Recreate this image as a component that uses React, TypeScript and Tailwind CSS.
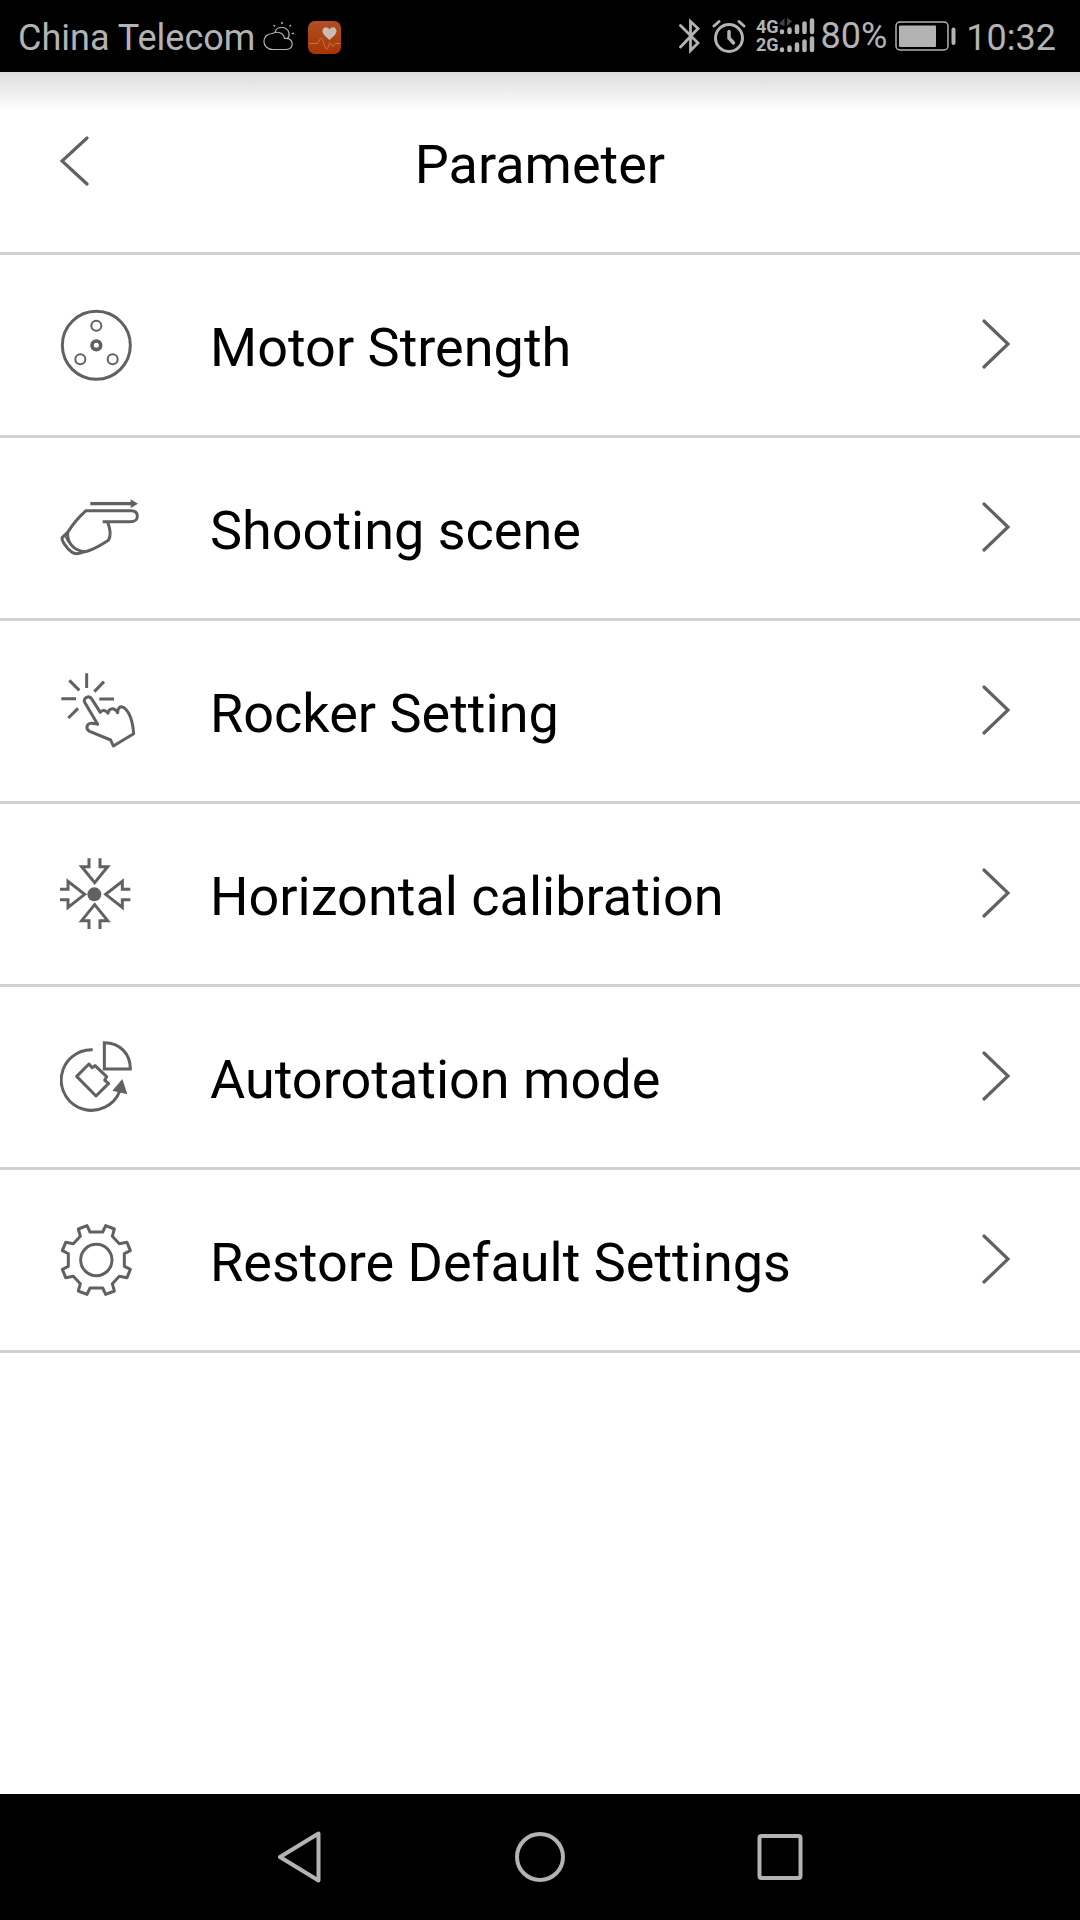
import type { ReactNode } from "react";

type IconProps = { viewBox: string; children: ReactNode };

function RowIcon({ viewBox, children }: IconProps) {
  return (
    <svg
      viewBox={viewBox}
      className="size-20 shrink-0"
      fill="none"
      stroke="#626060"
      strokeWidth={9}
      strokeLinejoin="round"
      aria-hidden="true"
    >
      {children}
    </svg>
  );
}

const motorIcon = (
  <RowIcon viewBox="60 45 240 240">
    <circle cx={169} cy={166} r={102} />
    <circle cx={169} cy={166} r={13} strokeWidth={11} />
    <circle cx={169} cy={107} r={15} strokeWidth={6} />
    <circle cx={121} cy={208} r={15} strokeWidth={6} />
    <circle cx={218} cy={208} r={15} strokeWidth={6} />
  </RowIcon>
);

const sceneIcon = (
  <RowIcon viewBox="60 24 240 240">
    <path d="M151 71H276" strokeWidth={10} />
    <path d="M272 58L294 71L272 84Z" fill="#626060" stroke="none" />
    <path d="M188 125L270 125C287 125 292 120 292 108C292 97 286 92 273 92L138 92C118 110 98 133 83 157C81 185 98 212 136 215C161 210 184 194 205 181C215 166 210 145 203 126" />
    <path d="M83 157L67 172C62 180 82 207 96 217C106 224 118 222 134 215" />
    <path d="M75 167C82 186 97 204 122 214" strokeWidth={5} />
  </RowIcon>
);

const rockerIcon = (
  <RowIcon viewBox="60 33 240 240">
    <path d="M140 40V84M88 61L118 91M192 65L163 95M64 116H108M178 117H222M114 145L85 174" />
    <path d="M173 193L134 127C128 113 148 104 156 118L181 157C184 151 196 147 204 160C206 145 222 140 233 158C233 143 240 138 250 142C268 154 278 183 281 221L220 258L212 240L149 214C136 207 140 193 150 190C157 188 166 191 173 193Z" />
  </RowIcon>
);

const calibrationIcon = (
  <RowIcon viewBox="60 42 240 240">
    <circle cx={163} cy={163} r={21} fill="#626060" stroke="none" />
    <g strokeLinejoin="miter">
      <path d="M147 55V80H125L164 128L203 80H180V55" />
      <path d="M147 267V242H125L164 194L203 242H180V267" />
      <path d="M60 148H84V124L134 163L84 202V179H60" />
      <path d="M271 148H247V124L197 163L247 202V179H271" />
    </g>
  </RowIcon>
);

const rotationIcon = (
  <RowIcon viewBox="60 51 240 240">
    <path d="M158 89A91 91 0 1 0 239 214" />
    <path d="M247 177L217 212L262 223Z" fill="#626060" stroke="none" />
    <path d="M193 68V147H271C271 100 240 69 193 68Z" strokeLinejoin="miter" />
    <path d="M147 132L110 169L168 228L206 190L194 181L200 170L165 137L156 143Z" />
  </RowIcon>
);

const gearIcon = (
  <RowIcon viewBox="60 30 240 240">
    <circle cx={169} cy={150} r={47} />
    <path d="M150 66H188L197 47L223 57L217 79L238 101L261 97L271 122L253 131V169L271 178L261 203L238 199L217 221L223 243L197 253L188 234H150L141 253L115 243L121 221L100 199L77 203L67 178L85 169V131L67 122L77 97L100 101L121 79L115 57L141 47Z" />
  </RowIcon>
);

const items = [
  { label: "Motor Strength", icon: motorIcon },
  { label: "Shooting scene", icon: sceneIcon },
  { label: "Rocker Setting", icon: rockerIcon },
  { label: "Horizontal calibration", icon: calibrationIcon },
  { label: "Autorotation mode", icon: rotationIcon },
  { label: "Restore Default Settings", icon: gearIcon },
];

function WeatherIcon() {
  return (
    <svg viewBox="0 0 32 30" className="h-[30px] w-8" fill="none" stroke="#b3b3b3" strokeWidth={1.2} strokeLinecap="round" aria-hidden="true">
      <path d="M10 28.500C-2 28.500 -2 12.500 9.500 12.500C15 9.500 21 12.500 21.500 17.500C31 16 32 28.500 23 28.500Z" />
      <path d="M12 11.500C13 5 24 4.500 26 12C26.500 14.500 26 16 24.500 17.500" />
      <path d="M19 1.500V2.500M11 4.500L11.500 5M27.500 4.500L27 5M29.500 12.500H30.500" strokeWidth={1.600} />
    </svg>
  );
}

function HealthIcon() {
  return (
    <svg viewBox="0 0 33 33" className="size-[33px]" aria-hidden="true">
      <defs>
        <linearGradient id="health" x1="0" y1="0" x2="0" y2="1">
          <stop offset="0" stopColor="#b04f26" />
          <stop offset="1" stopColor="#a93404" />
        </linearGradient>
      </defs>
      <rect width={33} height={33} rx={7} fill="url(#health)" />
      <path d="M1 22.500H9C11 22 12 16 13.500 17C16 20 16.500 27 18.500 28C20.500 28 21 21 22.500 22C24 24 24 26 25.500 25C26.500 23 27 22.500 28 22.500H32" fill="none" stroke="#c07d3c" />
      <path d="M21.500 19C17 15 14.500 13 14.500 10C14.500 6 19.500 5 21.500 8.500C23.500 5 28.500 6 28.500 10C28.500 13 26 15 21.500 19Z" fill="#c9bcb2" />
    </svg>
  );
}

function BluetoothIcon() {
  return (
    <svg viewBox="0 0 21 36" className="h-9 w-[21px]" fill="none" stroke="#b3b3b3" strokeWidth={2.800} aria-hidden="true">
      <path d="M1.500 7.500L19 25L11.500 32.500V3.500L19 10.500L1.500 29" strokeLinecap="round" />
    </svg>
  );
}

function AlarmIcon() {
  return (
    <svg viewBox="0 0 34 36" className="h-9 w-[34px]" fill="none" stroke="#b3b3b3" strokeWidth={3} strokeLinecap="round" aria-hidden="true">
      <circle cx={17} cy={20} r={13.500} />
      <path d="M17 13.500V20L21.500 25" strokeWidth={3.500} />
      <path d="M2 8L7 3.500M32 8L27 3.500" />
    </svg>
  );
}

function SignalBars() {
  return (
    <svg viewBox="0 0 38 36" className="h-9 w-[38px]" fill="none" stroke="#b3b3b3" strokeWidth={4.500} strokeLinecap="round" aria-hidden="true">
      <path d="M3 14V13.500M10.500 14V11.500M18 14V8.500M25.500 14V5.500M33 14V2.500" />
      <path d="M3 32V31.500M10.500 32V29.500M18 32V26.500M25.500 32V23.500M33 32V20.500" />
      <path d="M0 6L5.500 0V8M13 3L8 8V0" stroke="none" fill="#444" />
    </svg>
  );
}

function BatteryIcon() {
  return (
    <svg viewBox="0 0 61 30" className="h-[30px] w-[61px]" aria-hidden="true">
      <rect x={1} y={1} width={52} height={28} rx={4} fill="none" stroke="#b3b3b3" strokeWidth={1.500} />
      <rect x={4} y={4.500} width={37} height={21.500} rx={1} fill="#b3b3b3" />
      <rect x={56.500} y={6.500} width={4} height={17.500} rx={2} fill="#b3b3b3" />
    </svg>
  );
}

export default function App() {
  return (
    <div className="flex min-h-screen flex-col bg-white font-['Roboto','Noto_Sans',sans-serif] text-black">
      <div className="flex h-[72px] items-center justify-between bg-black pr-6 pl-[18px] text-4xl text-[#b3b3b3]">
        <div className="flex items-center">
          <span className="pt-1">China Telecom</span>
          <span className="ml-2">
            <WeatherIcon />
          </span>
          <span className="ml-[13px] pt-0.5">
            <HealthIcon />
          </span>
        </div>
        <div className="flex items-center">
          <BluetoothIcon />
          <span className="ml-3">
            <AlarmIcon />
          </span>
          <span className="ml-2.5 flex flex-col text-lg leading-[18px] font-bold">
            <span>4G</span>
            <span>2G</span>
          </span>
          <SignalBars />
          <span className="ml-1">80%</span>
          <span className="ml-2">
            <BatteryIcon />
          </span>
          <time className="ml-2.5 pt-1">10:32</time>
        </div>
      </div>

      <header className="grid h-[183px] grid-cols-[1fr_auto_1fr] items-center border-b-3 border-[#d0d0d0] bg-linear-to-b from-[#dcdcdc] to-white to-[38px]">
        <button type="button" aria-label="Back" className="w-fit pl-[60px]">
          <svg viewBox="0 0 30 52" className="h-[52px] w-[30px]" fill="none" stroke="#626060" strokeWidth={3.200} strokeLinecap="round" aria-hidden="true">
            <path d="M27 2L2 25L27 48" />
          </svg>
        </button>
        <h1 className="pt-1.5 text-[54px] leading-[64px]">Parameter</h1>
      </header>

      <main className="grow">
        <ul>
          {items.map((item) => (
            <li key={item.label}>
              <button
                type="button"
                className="flex h-[183px] w-full items-center border-b-3 border-[#d0d0d0] pr-[68px] pl-[60px] text-left"
              >
                {item.icon}
                <span className="ml-[70px] grow pt-1.5 text-[54px] leading-[64px]">{item.label}</span>
                <svg viewBox="0 0 30 52" className="h-[52px] w-[30px] shrink-0" fill="none" stroke="#626060" strokeWidth={3.200} strokeLinecap="round" aria-hidden="true">
                  <path d="M2 2L26 25L2 48" />
                </svg>
              </button>
            </li>
          ))}
        </ul>
      </main>

      <nav className="flex h-[126px] justify-center bg-black" aria-label="System navigation">
        <div className="grid w-2/3 grid-cols-3 place-items-center">
          <button type="button" aria-label="Back">
            <svg viewBox="0 0 52 52" className="size-[52px]" fill="none" stroke="#b3b3b3" strokeWidth={4} strokeLinejoin="round" aria-hidden="true">
              <path d="M6 26L44.500 2.500V49.500Z" />
            </svg>
          </button>
          <button type="button" aria-label="Home">
            <svg viewBox="0 0 52 52" className="size-[52px]" fill="none" stroke="#b3b3b3" strokeWidth={4} aria-hidden="true">
              <circle cx={26} cy={26} r={23} />
            </svg>
          </button>
          <button type="button" aria-label="Recent apps">
            <svg viewBox="0 0 52 52" className="size-[52px]" fill="none" stroke="#b3b3b3" strokeWidth={4} aria-hidden="true">
              <rect x={5.500} y={5} width={41} height={42} rx={2} />
            </svg>
          </button>
        </div>
      </nav>
    </div>
  );
}
